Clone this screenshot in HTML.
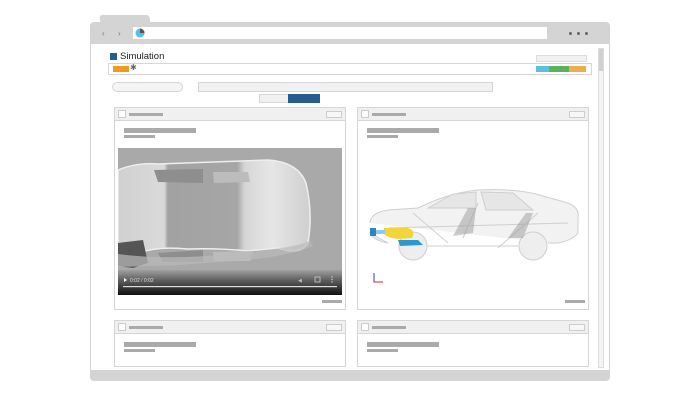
<!DOCTYPE html>
<html><head><meta charset="utf-8"><style>
*{margin:0;padding:0;box-sizing:border-box}
body{width:700px;height:400px;background:#fff;position:relative;overflow:hidden;font-family:"Liberation Sans",sans-serif}
.a{position:absolute}
.bar{position:absolute;background:#aaa}
.panel{position:absolute;border:1px solid #d6d6d6;background:#fff}
.ph{position:absolute;left:0;right:0;top:0;height:13px;background:#f0f0f0;border-bottom:1px solid #d6d6d6}
.cb{position:absolute;left:3px;top:2px;width:8px;height:8px;border:1px solid #ccc;background:#fff}
.hb{position:absolute;left:14px;top:5px;width:34px;height:3px;background:#aaa}
.btn{position:absolute;right:3px;top:3px;width:16px;height:7px;border:1px solid #ccc;background:#f7f7f7}
</style></head><body>
<div class="a" style="left:100px;top:15px;width:50px;height:10px;background:#d4d4d4;border-radius:3px 3px 0 0;transform:skewX(8deg)"></div>
<div class="a" style="left:90px;top:22px;width:520px;height:359px;background:#d4d4d4;border-radius:4px"></div>
<div class="a" style="left:91px;top:44px;width:518px;height:326px;background:#fff"></div>
<div class="a" style="left:102px;top:29px;font-size:8px;color:#777">‹</div>
<div class="a" style="left:118px;top:29px;font-size:8px;color:#777">›</div>
<div class="a" style="left:133px;top:27px;width:414px;height:12px;background:#fff"></div>
<svg class="a" style="left:135px;top:28px" width="10" height="10"><circle cx="5" cy="5" r="4.5" fill="#4fc0ef"/><path d="M5 5V0.5A4.5 4.5 0 0 1 9.5 5Z" fill="#555"/></svg>
<div class="a" style="left:569px;top:32px;width:3px;height:3px;border-radius:50%;background:#666"></div>
<div class="a" style="left:577px;top:32px;width:3px;height:3px;border-radius:50%;background:#666"></div>
<div class="a" style="left:585px;top:32px;width:3px;height:3px;border-radius:50%;background:#666"></div>
<div class="a" style="left:598px;top:48px;width:6px;height:320px;border:1px solid #ddd;background:#f4f4f4"></div>
<div class="a" style="left:599px;top:49px;width:4px;height:22px;background:#d0d0d0"></div>
<div class="a" style="left:110px;top:53px;width:7px;height:7px;background:#265d8d"></div>
<div class="a" style="left:120px;top:51px;font-size:9.5px;color:#222;line-height:11px">Simulation</div>
<div class="a" style="left:536px;top:55px;width:51px;height:7px;border:1px solid #ddd;background:#f2f2f2"></div>
<div class="a" style="left:108px;top:63px;width:484px;height:12px;border:1px solid #d6d6d6"></div>
<div class="a" style="left:113px;top:66px;width:16px;height:6px;background:#f09a22"></div>
<div class="a" style="left:130px;top:63px;font-size:8px;color:#666">✱</div>
<div class="a" style="left:536px;top:66px;width:13px;height:6px;background:#5bbfe0"></div>
<div class="a" style="left:549px;top:66px;width:20px;height:6px;background:#58b35a"></div>
<div class="a" style="left:569px;top:66px;width:17px;height:6px;background:#efab4e"></div>
<div class="a" style="left:112px;top:82px;width:71px;height:10px;border:1px solid #d6d6d6;border-radius:5px;background:#f4f4f4"></div>
<div class="a" style="left:198px;top:82px;width:295px;height:10px;border:1px solid #d6d6d6;background:#f1f1f1"></div>
<div class="a" style="left:259px;top:94px;width:30px;height:9px;border:1px solid #d6d6d6;background:#f1f1f1"></div>
<div class="a" style="left:288px;top:94px;width:32px;height:9px;background:#265d8d"></div>
<div class="panel" style="left:114px;top:107px;width:232px;height:203px">
 <div class="ph"><div class="cb"></div><div class="hb"></div><div class="btn"></div></div>
 <div class="bar" style="left:9px;top:20px;width:72px;height:5px"></div>
 <div class="bar" style="left:9px;top:27px;width:31px;height:3px"></div>
 <svg class="a" style="left:3px;top:40px" width="224" height="147" viewBox="0 0 224 147">
  <defs><linearGradient id="vb" x1="0" y1="0" x2="0" y2="1"><stop offset="0" stop-color="#a0a0a0"/><stop offset="0.4" stop-color="#606060"/><stop offset="1" stop-color="#111"/></linearGradient>
  <linearGradient id="rf" x1="0" y1="0" x2="1" y2="0"><stop offset="0" stop-color="#d0d0d0"/><stop offset="0.24" stop-color="#dadada"/><stop offset="0.26" stop-color="#a2a2a2"/><stop offset="0.62" stop-color="#a6a6a6"/><stop offset="0.66" stop-color="#d6d6d6"/><stop offset="0.8" stop-color="#e6e6e6"/><stop offset="1" stop-color="#cfcfcf"/></linearGradient></defs>
  <rect width="224" height="147" fill="#a9a9a9"/>
  <path d="M0 22 Q20 14 40 16 L150 12 Q180 14 188 35 Q195 65 190 95 Q182 108 160 100 L130 103 Q100 100 70 101 Q40 98 20 105 L0 108 Z" fill="url(#rf)" stroke="#eee" stroke-width="1.5"/>
  <path d="M36 22 L85 21 L85 35 L40 34Z" fill="#8e8e8e"/>
  <path d="M95 24 L130 24 L132 34 L96 35Z" fill="#bcbcbc"/>
  <path d="M40 105 L85 102 L85 114 L45 114Z" fill="#8e8e8e"/>
  <path d="M95 104 L135 103 L132 113 L96 113Z" fill="#bcbcbc"/>
  <path d="M0 95 L25 92 L30 115 L15 120 L0 118Z" fill="#555"/>
  <path d="M0 106 Q60 114 150 102 Q180 98 192 93 L195 98 Q170 108 130 112 L60 117 L0 119Z" fill="#bbb" opacity=".7"/>
  <rect y="122" width="224" height="25" fill="url(#vb)"/>
  <path d="M6 130 L9 132 L6 134Z" fill="#fff"/>
  <text x="12" y="134" font-size="5" fill="#ddd" font-family="Liberation Sans">0:02 / 0:02</text>
  <text x="180" y="134" font-size="5" fill="#bbb">◀</text>
  <rect x="197" y="129" width="5" height="5" fill="none" stroke="#ccc" stroke-width=".8"/>
  <circle cx="214" cy="129" r=".7" fill="#ccc"/><circle cx="214" cy="131.5" r=".7" fill="#ccc"/><circle cx="214" cy="134" r=".7" fill="#ccc"/>
  <rect x="5" y="138" width="214" height="1.2" fill="#ddd"/>
 </svg>
 <div class="bar" style="left:207px;top:192px;width:20px;height:3px"></div>
</div>
<div class="panel" style="left:357px;top:107px;width:232px;height:203px">
 <div class="ph"><div class="cb"></div><div class="hb"></div><div class="btn"></div></div>
 <div class="bar" style="left:9px;top:20px;width:72px;height:5px"></div>
 <div class="bar" style="left:9px;top:27px;width:31px;height:3px"></div>
 <svg class="a" style="left:10px;top:80px" width="215" height="80" viewBox="0 0 215 80">
  <g fill="none" stroke="#cfcfcf" stroke-width="1">
   <path d="M2 35 Q2 25 20 22 L50 20 Q80 5 110 2 Q150 0 175 8 L200 15 Q212 20 210 30 L210 45 Q205 52 190 55 L180 55 M150 58 L50 58 M20 55 Q5 52 2 45Z" fill="#f2f2f2"/>
   <circle cx="45" cy="58" r="14" fill="#eee"/><circle cx="165" cy="58" r="14" fill="#eee"/>
   <path d="M60 20 L85 6 L108 4 L108 20Z M113 4 L145 5 L165 22 L118 22Z" fill="#e6e6e6"/>
   <path d="M130 60 L170 25 M95 50 L110 15 M45 25 L80 55 M20 40 L200 35"/>
  </g>
  <path d="M100 20 L108 20 L105 45 L85 48 Z" fill="#999" opacity=".5"/>
  <path d="M158 25 L165 25 L155 50 L140 50 Z" fill="#999" opacity=".5"/>
  <path d="M16 40 L40 40 Q48 42 44 50 L30 51 Q20 50 16 46Z" fill="#f3d43a"/>
  <rect x="2" y="40" width="6" height="8" fill="#2c86c5"/>
  <rect x="8" y="42" width="9" height="4" fill="#8ccbe8"/>
  <path d="M30 52 L50 52 L55 57 L32 58Z" fill="#2c9ad0"/>
 </svg>
 <svg class="a" style="left:14px;top:164px" width="12" height="12"><path d="M2 1V10H11" fill="none" stroke="#2342c0" stroke-width="1"/><path d="M2 10H11" stroke="#e02020" stroke-width="1"/></svg>
 <div class="bar" style="left:207px;top:192px;width:20px;height:3px"></div>
</div>
<div class="panel" style="left:114px;top:320px;width:232px;height:47px">
 <div class="ph"><div class="cb"></div><div class="hb"></div><div class="btn"></div></div>
 <div class="bar" style="left:9px;top:21px;width:72px;height:5px"></div>
 <div class="bar" style="left:9px;top:28px;width:31px;height:3px"></div>
</div>
<div class="panel" style="left:357px;top:320px;width:232px;height:47px">
 <div class="ph"><div class="cb"></div><div class="hb"></div><div class="btn"></div></div>
 <div class="bar" style="left:9px;top:21px;width:72px;height:5px"></div>
 <div class="bar" style="left:9px;top:28px;width:31px;height:3px"></div>
</div>
</body></html>
